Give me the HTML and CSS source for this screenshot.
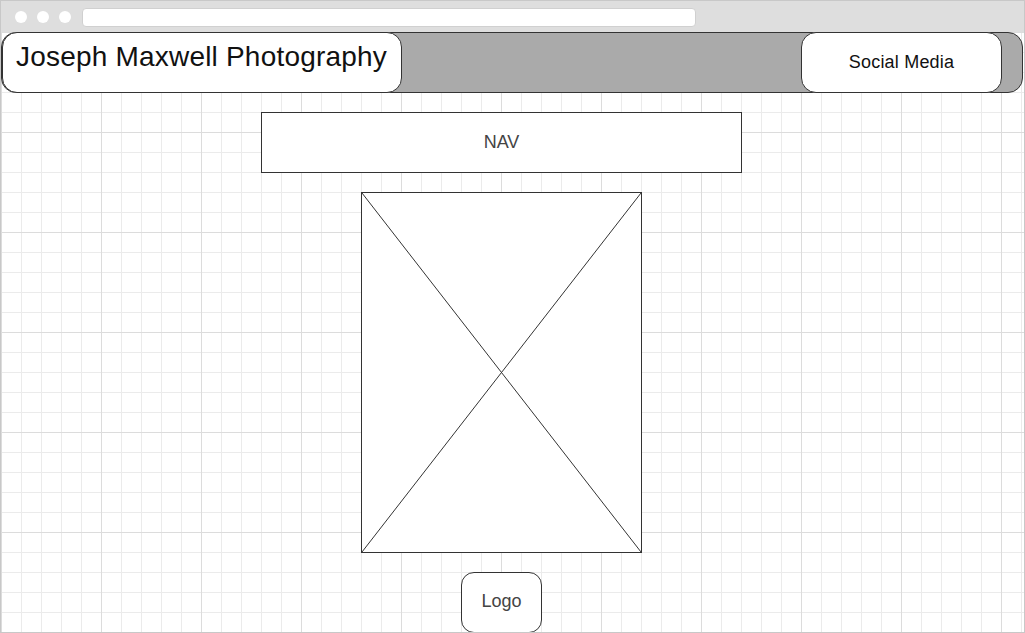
FILE: index.html
```html
<!DOCTYPE html>
<html lang="en">
<head>
    <meta charset="UTF-8">
    <meta name="viewport" content="width=device-width, initial-scale=1.0">
    <title>Joseph Maxwell Photography - Wireframe</title>
    <link rel="stylesheet" href="styles.css">
</head>
<body>
    <div class="window">
        <div class="chrome">
            <span class="dot"></span>
            <span class="dot"></span>
            <span class="dot"></span>
            <div class="url-bar"></div>
        </div>

        <div class="canvas">
            <div class="header">
                <div class="title">Joseph Maxwell Photography</div>
                <div class="social">Social Media</div>
            </div>

            <div class="stack">
                <div class="nav">NAV</div>
                <div class="picture">
                    <svg viewBox="0 0 100 100" preserveAspectRatio="none">
                        <line x1="0" y1="0" x2="100" y2="100" vector-effect="non-scaling-stroke"/>
                        <line x1="100" y1="0" x2="0" y2="100" vector-effect="non-scaling-stroke"/>
                    </svg>
                </div>
                <div class="logo">Logo</div>
            </div>
        </div>
    </div>
</body>
</html>
```

FILE: styles.css
```css
body, html {
    margin: 0;
    height: 100%;
    font-family: 'Liberation Sans', Arial, sans-serif;
    background-color: #ffffff;
}

.window {
    width: 1025px;
    height: 633px;
    box-sizing: border-box;
    border: 1px solid #c8c8c8;
    display: flex;
    flex-direction: column;
    overflow: hidden;
}

.chrome {
    height: 31px;
    flex-shrink: 0;
    background-color: #dedede;
    display: flex;
    align-items: center;
    padding-left: 14px;
    gap: 10px;
}

.dot {
    width: 12px;
    height: 12px;
    border-radius: 50%;
    background-color: #ffffff;
    margin-top: 1px;
}

.url-bar {
    margin-left: 1px;
    width: 614px;
    height: 19px;
    box-sizing: border-box;
    background-color: #ffffff;
    border: 1px solid #d0d0d0;
    border-radius: 4px;
    margin-top: 1px;
}

.canvas {
    flex: 1;
    background:
        linear-gradient(to right, #dcdcdc 1px, transparent 1px) 0 0 / 100px 100px,
        linear-gradient(to bottom, #dcdcdc 1px, transparent 1px) 0 0 / 100px 100px,
        linear-gradient(to right, #ebebeb 1px, transparent 1px) 0 0 / 20px 20px,
        linear-gradient(to bottom, #ebebeb 1px, transparent 1px) 0 0 / 20px 20px,
        #ffffff;
    display: flex;
    flex-direction: column;
}

.header {
    height: 61px;
    width: 1022px;
    flex-shrink: 0;
    box-sizing: border-box;
    border: 1px solid #333333;
    border-radius: 15px;
    background-color: #aaaaaa;
    display: flex;
    justify-content: space-between;
}

.title {
    width: 400px;
    margin: -1px 0 -1px 0;
    box-sizing: border-box;
    background-color: #ffffff;
    border: 1px solid #333333;
    border-radius: 15px;
    padding: 8px 0 0 13px;
    font-size: 28px;
    letter-spacing: 0.2px;
    color: #111111;
}

.social {
    width: 201px;
    margin: -1px 20px -1px 0;
    box-sizing: border-box;
    background-color: #ffffff;
    border: 1px solid #333333;
    border-radius: 15px;
    display: flex;
    align-items: center;
    justify-content: center;
    font-size: 18px;
    letter-spacing: 0.2px;
    color: #111111;
}

.stack {
    width: 1000px;
    display: flex;
    flex-direction: column;
    align-items: center;
    gap: 20px;
    padding-top: 19px;
}

.nav {
    width: 481px;
    height: 61px;
    box-sizing: border-box;
    border: 1px solid #333333;
    background-color: #ffffff;
    display: flex;
    align-items: center;
    justify-content: center;
    font-size: 18px;
    color: #444444;
    margin-left: 1px;
}

.picture {
    width: 281px;
    height: 361px;
    box-sizing: border-box;
    border: 1px solid #333333;
    background-color: #ffffff;
    margin-top: -1px;
    margin-left: 1px;
}

.picture svg {
    display: block;
    width: 100%;
    height: 100%;
}

.picture line {
    stroke: #333333;
    stroke-width: 1;
}

.logo {
    width: 81px;
    height: 61px;
    box-sizing: border-box;
    border: 1px solid #333333;
    border-radius: 13px;
    background-color: #ffffff;
    display: flex;
    align-items: center;
    justify-content: center;
    padding-bottom: 2px;
    font-size: 18px;
    color: #444444;
    margin-top: -1px;
    margin-left: 1px;
    flex-shrink: 0;
}
```
